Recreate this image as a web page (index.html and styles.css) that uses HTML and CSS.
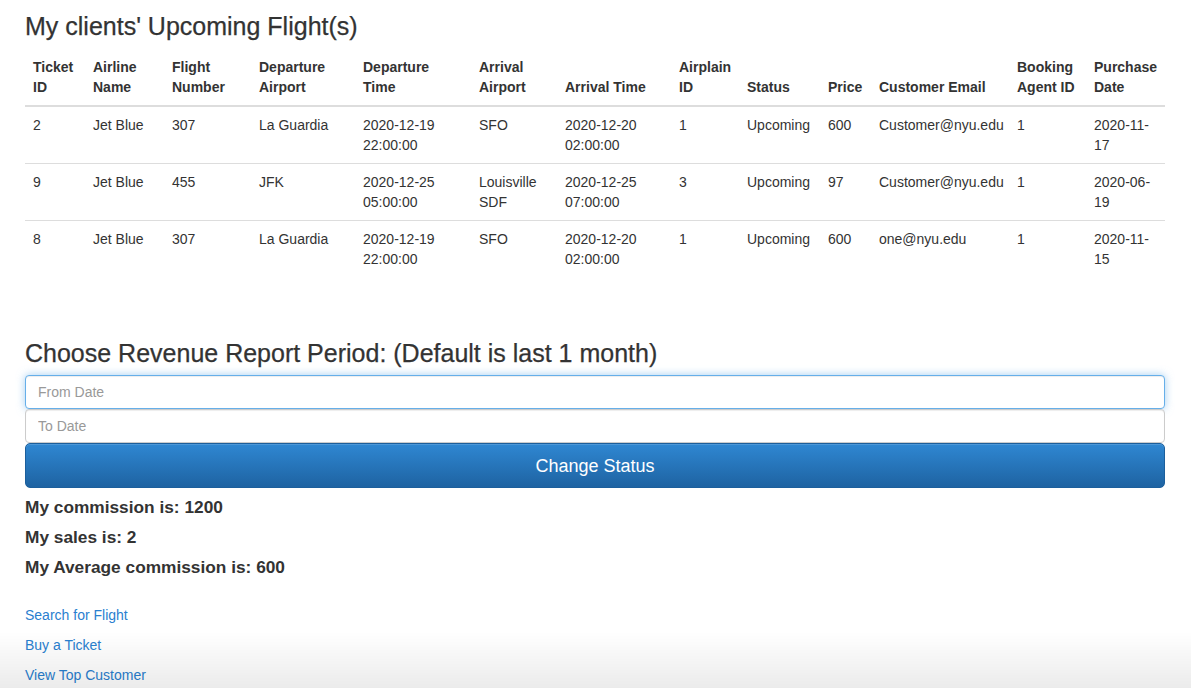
FILE: index.html
```html
<!DOCTYPE html>
<html lang="en">
<head>
<meta charset="utf-8">
<title>Booking Agent</title>
<link rel="stylesheet" href="styles.css">
</head>
<body>
<div class="container">
  <h3 class="title first">My clients' Upcoming Flight(s)</h3>
  <table class="flights">
    <colgroup>
      <col class="c-id"><col class="c-airline"><col class="c-num"><col class="c-dep"><col class="c-deptime">
      <col class="c-arr"><col class="c-arrtime"><col class="c-plane"><col class="c-status"><col class="c-price">
      <col class="c-email"><col class="c-agent"><col class="c-date">
    </colgroup>
    <thead>
      <tr>
        <th>Ticket ID</th><th>Airline Name</th><th>Flight Number</th><th>Departure Airport</th><th>Departure Time</th>
        <th>Arrival Airport</th><th>Arrival Time</th><th>Airplain ID</th><th>Status</th><th>Price</th>
        <th>Customer Email</th><th>Booking Agent ID</th><th>Purchase Date</th>
      </tr>
    </thead>
    <tbody>
      <tr>
        <td>2</td><td>Jet Blue</td><td>307</td><td>La Guardia</td><td>2020-12-19 22:00:00</td>
        <td>SFO</td><td>2020-12-20 02:00:00</td><td>1</td><td>Upcoming</td><td>600</td>
        <td>Customer@nyu.edu</td><td>1</td><td>2020-11-17</td>
      </tr>
      <tr>
        <td>9</td><td>Jet Blue</td><td>455</td><td>JFK</td><td>2020-12-25 05:00:00</td>
        <td>Louisville SDF</td><td>2020-12-25 07:00:00</td><td>3</td><td>Upcoming</td><td>97</td>
        <td>Customer@nyu.edu</td><td>1</td><td>2020-06-19</td>
      </tr>
      <tr>
        <td>8</td><td>Jet Blue</td><td>307</td><td>La Guardia</td><td>2020-12-19 22:00:00</td>
        <td>SFO</td><td>2020-12-20 02:00:00</td><td>1</td><td>Upcoming</td><td>600</td>
        <td>one@nyu.edu</td><td>1</td><td>2020-11-15</td>
      </tr>
    </tbody>
  </table>

  <h3 class="title second">Choose Revenue Report Period: (Default is last 1 month)</h3>
  <form class="period">
    <input class="form-control focused" type="text" placeholder="From Date">
    <input class="form-control" type="text" placeholder="To Date">
    <button class="btn-primary" type="button">Change Status</button>
  </form>

  <h4 class="stat">My commission is: 1200</h4>
  <h4 class="stat">My sales is: 2</h4>
  <h4 class="stat">My Average commission is: 600</h4>

  <nav class="links">
    <a href="#">Search for Flight</a>
    <a href="#">Buy a Ticket</a>
    <a href="#">View Top Customer</a>
  </nav>
</div>
<div class="bottom-fade"></div>
</body>
</html>
```
FILE: styles.css
```css
* { box-sizing: border-box; }
html, body { margin: 0; padding: 0; }
body {
  font-family: "Liberation Sans", Arial, sans-serif;
  font-size: 14px;
  line-height: 20px;
  color: #333;
  background: #fff;
}
.container {
  width: 1140px;
  margin: 0 26px 0 25px;
}
.title {
  font-size: 25px;
  font-weight: 500;
  line-height: 27.5px;
  margin: 0 0 8px;
  -webkit-text-stroke: 0.25px currentColor;
}
.title.first { padding-top: 13px; }
.title.second { margin-top: 63px; }

.flights {
  width: 100%;
  table-layout: fixed;
  border-collapse: collapse;
  border-spacing: 0;
  margin-bottom: 0;
}
.flights th, .flights td {
  padding: 8px;
  text-align: left;
  vertical-align: top;
  line-height: 20px;
}
.flights th {
  font-weight: bold;
  vertical-align: bottom;
  border-bottom: 2px solid #ddd;
}
.flights tbody tr + tr td { border-top: 1px solid #ddd; }

.c-id { width: 60px; }
.c-airline { width: 79px; }
.c-num { width: 87px; }
.c-dep { width: 104px; }
.c-deptime { width: 116px; }
.c-arr { width: 86px; }
.c-arrtime { width: 114px; }
.c-plane { width: 68px; }
.c-status { width: 81px; }
.c-price { width: 51px; }
.c-email { width: 138px; }
.c-agent { width: 77px; }
.c-date { width: 79px; }

.period { display: flex; flex-direction: column; margin: 0; }
.form-control {
  display: block;
  width: 100%;
  height: 34px;
  padding: 6px 12px;
  font-family: inherit;
  font-size: 14px;
  color: #555;
  background: #fff;
  border: 1px solid #ccc;
  border-radius: 4px;
  box-shadow: inset 0 1px 1px rgba(0,0,0,.075);
  outline: none;
}
.form-control::placeholder { color: #999; }
.form-control.focused {
  border-color: #66afe9;
  box-shadow: inset 0 1px 1px rgba(0,0,0,.075), 0 0 8px rgba(102,175,233,.6);
}
.btn-primary {
  display: block;
  width: 100%;
  height: 45px;
  padding: 10px 16px;
  font-family: inherit;
  font-size: 18px;
  line-height: 24px;
  color: #fff;
  background: linear-gradient(to bottom, #2f87d2 0%, #1e63a2 100%);
  border: 1px solid #1c5f9c;
  border-radius: 5px;
  box-shadow: inset 0 1px 0 rgba(255,255,255,.15);
  cursor: pointer;
}

.stat {
  font-size: 17.3px;
  font-weight: bold;
  line-height: 19.8px;
  margin: 10px 0;
}

.links {
  display: flex;
  flex-direction: column;
  align-items: flex-start;
  gap: 10px;
  margin-top: 28px;
}
.links a {
  color: #2a80cf;
  text-decoration: none;
  font-size: 14px;
  line-height: 20px;
}

.bottom-fade {
  position: fixed;
  left: 0;
  right: 0;
  bottom: 0;
  height: 56px;
  background: linear-gradient(to bottom, rgba(0,0,0,0) 0%, rgba(0,0,0,.08) 100%);
  pointer-events: none;
}
```
